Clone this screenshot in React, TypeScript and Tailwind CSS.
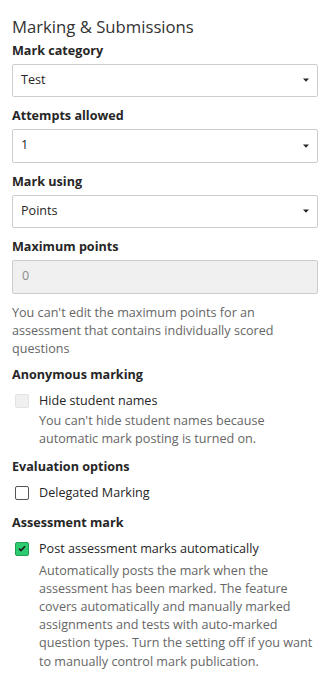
function Caret() {
  return (
    <svg width="6" height="4" viewBox="0 0 6 4" className="text-[#262626]">
      <path d="M0 0.5 L6 0.5 L3 3.8 Z" fill="currentColor" />
    </svg>
  );
}

function SelectBox({ value }: { value: string }) {
  return (
    <div className="flex h-[33.5px] items-center justify-between rounded-[2px] border border-[#cdcdcd] bg-white pl-[8px] pr-[8px] text-[12.6px] text-[#262626]">
      <span>{value}</span>
      <Caret />
    </div>
  );
}

function Label({ children }: { children: React.ReactNode }) {
  return <div className="text-[12.6px] leading-[18px] font-bold text-[#262626]">{children}</div>;
}

export default function App() {
  return (
    <div className="min-h-[685px] bg-white pl-3 pr-4 pt-[15px] [font-family:'Open_Sans',sans-serif] text-[#262626]">
      <h2 className="text-[16.7px] leading-[24px] text-[#333]">Marking &amp; Submissions</h2>

      <div className="mt-[2.5px] flex flex-col">
        <Label>Mark category</Label>
        <div className="mt-[4px]"><SelectBox value="Test" /></div>

        <div className="mt-[10px]"><Label>Attempts allowed</Label></div>
        <div className="mt-[4px]"><SelectBox value="1" /></div>

        <div className="mt-[10px]"><Label>Mark using</Label></div>
        <div className="mt-[4px]"><SelectBox value="Points" /></div>

        <div className="mt-[10px]"><Label>Maximum points</Label></div>
        <div className="mt-[4px] flex h-[33.5px] items-center rounded-[2px] border border-[#cdcdcd] bg-[#f0f0f0] pl-[9px] text-[12.6px] text-[#8a8a8a]">
          0
        </div>

        <p className="mt-[10px] text-[12.6px] leading-[18px] text-[#666]">
          You can't edit the maximum points for an assessment that contains individually scored questions
        </p>

        <div className="mt-[8px]"><Label>Anonymous marking</Label></div>
        <div className="mt-[7px] flex items-start gap-[10px] pl-[3px]">
          <span className="mt-[3px] h-[14px] w-[14px] shrink-0 rounded-[2px] border border-[#e3e3e3] bg-[#f0f0f0]" />
          <div>
            <div className="text-[12.6px] leading-[20px] text-[#262626]">Hide student names</div>
            <p className="mt-[1px] text-[12.6px] leading-[18px] text-[#666]">
              You can't hide student names because automatic mark posting is turned on.
            </p>
          </div>
        </div>

        <div className="mt-[10px]"><Label>Evaluation options</Label></div>
        <div className="mt-[7px] flex items-start gap-[10px] pl-[3px]">
          <span className="mt-[3px] h-[14px] w-[14px] shrink-0 rounded-[2px] border border-[#555] bg-white" />
          <div className="text-[12.6px] leading-[20px] text-[#262626]">Delegated Marking</div>
        </div>

        <div className="mt-[11px]"><Label>Assessment mark</Label></div>
        <div className="mt-[7px] flex items-start gap-[10px] pl-[3px]">
          <span className="mt-[3px] flex h-[14px] w-[14px] shrink-0 items-center justify-center rounded-[2px] border border-[#1f9e55] bg-[#2ecc71]">
            <svg width="8" height="7" viewBox="0 0 8 7">
              <path d="M1 3.6 L3 5.5 L7 1.2" fill="none" stroke="#1a1a1a" strokeWidth="1.6" />
            </svg>
          </span>
          <div>
            <div className="text-[12.6px] leading-[20px] text-[#262626]">Post assessment marks automatically</div>
            <p className="mt-[3px] text-[12.6px] leading-[18.2px] text-[#666]">
              Automatically posts the mark when the assessment has been marked. The feature covers automatically and manually marked assignments and tests with auto-marked question types. Turn the setting off if you want to manually control mark publication.
            </p>
          </div>
        </div>
      </div>
    </div>
  );
}
